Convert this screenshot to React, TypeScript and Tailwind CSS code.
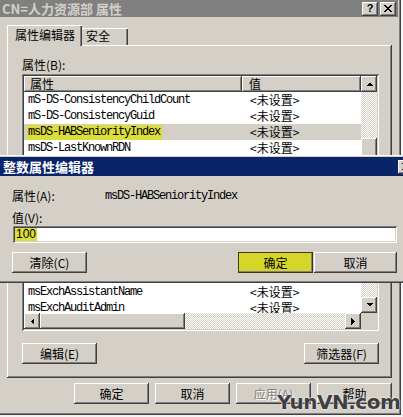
import React from "react";

const raised =
  "shadow-[inset_-1px_-1px_0_#404040,inset_1px_1px_0_#ffffff,inset_-2px_-2px_0_#808080]";
const sunken =
  "shadow-[inset_1px_1px_0_#808080,inset_-1px_-1px_0_#ffffff,inset_2px_2px_0_#404040,inset_-2px_-2px_0_#d4d0c8]";
const cjk = "font-['Noto_Sans_CJK_SC',sans-serif]";
const mono =
  "font-['Liberation_Mono','Noto_Sans_CJK_SC',monospace] text-[12px] tracking-[-1.2px]";
const dither =
  "bg-[repeating-conic-gradient(#ffffff_0%_25%,#d4d0c8_0%_50%)] bg-[length:2px_2px]";

type Dir = "up" | "down" | "left" | "right";

function Arrow({ dir }: { dir: Dir }) {
  const horiz = dir === "left" || dir === "right";
  const w = horiz ? 4 : 7;
  const h = horiz ? 7 : 4;
  const pts: Record<Dir, string> = {
    up: "0,4 7,4 3.5,0.5",
    down: "0,0 7,0 3.5,3.5",
    left: "4,0 4,7 0.5,3.5",
    right: "0,0 0,7 3.5,3.5",
  };
  return (
    <svg width={w} height={h} viewBox={`0 0 ${w} ${h}`} shapeRendering="crispEdges">
      <polygon points={pts[dir]} fill="#000" />
    </svg>
  );
}

function ScrollBtn({ dir }: { dir: Dir }) {
  return (
    <div className={`w-[16px] h-[16px] shrink-0 bg-[#d4d0c8] flex items-center justify-center ${raised}`}>
      <Arrow dir={dir} />
    </div>
  );
}

function Btn({
  label,
  className = "",
  disabled = false,
}: {
  label: string;
  className?: string;
  disabled?: boolean;
}) {
  return (
    <div
      className={`h-[21px] flex items-center justify-center text-[12px] ${cjk} ${raised} ${
        disabled ? "text-[#808080] [text-shadow:1px_1px_0_#ffffff]" : "text-black"
      } ${className}`}
    >
      {label}
    </div>
  );
}

const rows: { name: string; selected?: boolean }[] = [
  { name: "mS-DS-ConsistencyChildCount" },
  { name: "mS-DS-ConsistencyGuid" },
  { name: "msDS-HABSeniorityIndex", selected: true },
  { name: "msDS-LastKnownRDN" },
  { name: "msDS-NcType" },
  { name: "msDS-PhoneticCompanyName" },
  { name: "msDS-PhoneticDepartment" },
  { name: "msDS-PhoneticDisplayName" },
  { name: "msDS-PhoneticFirstName" },
  { name: "msDS-PhoneticLastName" },
  { name: "msExchADCGlobalNames" },
  { name: "msExchAddressBookFlags" },
  { name: "msExchAssistantName" },
  { name: "msExchAuditAdmin" },
];

function TitleBtn({ children }: { children: React.ReactNode }) {
  return (
    <div className={`w-[16px] h-[14px] bg-[#d4d0c8] flex items-center justify-center ${raised}`}>
      {children}
    </div>
  );
}

function XGlyph() {
  return (
    <svg width="8" height="7" viewBox="0 0 8 7" shapeRendering="crispEdges">
      <path d="M0 0h2v1h1v1h2v-1h1v-1h2v1h-1v1h-1v1h-1v1h1v1h1v1h1v1h-2v-1h-1v-1h-2v1h-1v1h-2v-1h1v-1h1v-1h1v-1h-1v-1h-1v-1h-1z" fill="#000" />
    </svg>
  );
}

export default function App() {
  return (
    <div className={`relative w-[403px] h-[417px] overflow-hidden bg-[#f4f4f4] ${cjk}`}>
      {/* Main properties window */}
      <div className="w-[401px] h-[415px] bg-[#d4d0c8] flex flex-col shadow-[inset_-1px_-1px_0_#404040,inset_-2px_-2px_0_#808080]">
        {/* Title bar */}
        <div className="h-[17px] mr-[3px] bg-[#808080] flex items-center justify-between pl-[2px] pr-[2px]">
          <span className="text-[13px] font-bold text-[#d4d0c8] leading-none whitespace-pre">
            CN=人力资源部 属性
          </span>
          <div className="flex items-center">
            <TitleBtn>
              <span className="text-[11px] font-bold font-['Liberation_Sans',sans-serif] leading-none">?</span>
            </TitleBtn>
            <div className="w-[2px]" />
            <TitleBtn>
              <XGlyph />
            </TitleBtn>
          </div>
        </div>

        <div className="pl-[7px] pr-[9px] pt-[8px] flex flex-col">
          {/* Tabs */}
          <div className="h-[20px] flex items-end">
            <div className="relative z-10 h-[21px] -mb-[1px] w-[75px] bg-[#d4d0c8] flex items-start pl-[8px] pt-[4px] text-[12px] leading-none shadow-[inset_1px_1px_0_#ffffff,inset_-1px_0_0_#404040,inset_-2px_0_0_#808080]">
              属性编辑器
            </div>
            <div className="h-[17px] w-[46px] bg-[#d4d0c8] flex items-start pl-[4px] pt-[2px] text-[12px] leading-none shadow-[inset_0_1px_0_#ffffff,inset_-1px_0_0_#404040,inset_-2px_0_0_#808080]">
              安全
            </div>
          </div>

          {/* Tab panel */}
          <div className={`h-[333px] bg-[#d4d0c8] pl-[15px] pt-[12px] flex flex-col ${raised}`}>
            <div className="h-[16px] text-[12px] leading-[16px]">属性(B):</div>
            {/* List box */}
            <div className={`mt-[1px] w-[357px] h-[257px] bg-white p-[2px] flex flex-col ${sunken}`}>
              <div className="flex flex-1 min-h-0">
                <div className="flex-1 min-w-0 flex flex-col overflow-hidden">
                  <div className="h-[16px] shrink-0 grid grid-cols-[218px_119px] bg-[#d4d0c8] text-[12px]">
                    <div className={`pl-[6px] leading-[16px] ${raised}`}>属性</div>
                    <div className={`pl-[7px] leading-[16px] ${raised}`}>值</div>
                  </div>
                  {rows.map((r) => (
                    <div
                      key={r.name}
                      className={`h-[16px] shrink-0 grid grid-cols-[218px_119px] items-center ${
                        r.selected ? "bg-[#d4d0c8]" : ""
                      }`}
                    >
                      <div className="pl-[3px] flex">
                        <span
                          className={`${mono} leading-[15px] pl-[1px] pr-[2px] ${
                            r.selected ? "bg-[#dcdc3c]" : ""
                          }`}
                        >
                          {r.name}
                        </span>
                      </div>
                      <div className="pl-[8px] text-[12px] leading-[16px]">&lt;未设置&gt;</div>
                    </div>
                  ))}
                </div>
                {/* Vertical scrollbar */}
                <div className={`w-[16px] flex flex-col ${dither}`}>
                  <ScrollBtn dir="up" />
                  <div className="h-[46px]" />
                  <div className={`h-[60px] bg-[#d4d0c8] ${raised}`} />
                  <div className="flex-1" />
                  <ScrollBtn dir="down" />
                </div>
              </div>
              {/* Horizontal scrollbar */}
              <div className="h-[16px] flex">
                <div className={`flex-1 flex ${dither}`}>
                  <ScrollBtn dir="left" />
                  <div className={`w-[145px] bg-[#d4d0c8] ${raised}`} />
                  <div className="flex-1" />
                  <ScrollBtn dir="right" />
                </div>
                <div className="w-[16px] bg-[#d4d0c8]" />
              </div>
            </div>
            <div className="mt-[12px] w-[357px] flex justify-between">
              <Btn label="编辑(E)" className="w-[75px]" />
              <Btn label="筛选器(F)" className="w-[75px]" />
            </div>
          </div>

          {/* Bottom buttons */}
          <div className="mt-[5px] flex justify-end gap-[6px]">
            <Btn label="确定" className="w-[75px]" />
            <Btn label="取消" className="w-[75px]" />
            <Btn label="应用(A)" className="w-[75px]" disabled />
            <Btn label="帮助" className="w-[75px]" />
          </div>
        </div>
      </div>

      {/* Integer attribute editor dialog */}
      <div
        className={`absolute left-[-3px] top-[155px] w-[421px] h-[128px] bg-[#d4d0c8] p-[2px] flex flex-col ${raised}`}
      >
        <div className="h-[19px] bg-[#0a246a] flex items-center justify-between pl-[4px] pr-[2px]">
          <span className="text-[13px] font-bold text-white leading-none">整数属性编辑器</span>
          <TitleBtn>
            <XGlyph />
          </TitleBtn>
        </div>
        <div className="pl-[13px] flex flex-col">
          <div className="mt-[13px] h-[14px] flex items-center text-[12px]">
            <span className="w-[93px]">属性(A):</span>
            <span className={`${mono}`}>msDS-HABSeniorityIndex</span>
          </div>
          <div className="mt-[8px] h-[14px] flex items-center text-[12px]">值(V):</div>
          <div className={`mt-[1px] ml-[1px] w-[384px] h-[17px] bg-white pl-[2px] flex items-center ${sunken}`}>
            <span className="bg-[#dcdc3c] px-[1px] text-[12px] leading-[13px] font-['Liberation_Sans',sans-serif]">
              100
            </span>
          </div>
          <div className="mt-[9px] flex">
            <Btn label="清除(C)" className="w-[75px]" />
            <Btn
              label="确定"
              className="ml-[151px] w-[75px] bg-[#d6d62a] outline outline-1 outline-[#3a3a10] -outline-offset-1"
            />
            <Btn label="取消" className="ml-[1px] w-[83px]" />
          </div>
        </div>
      </div>

      {/* Watermark */}
      <div className="absolute left-[277px] top-[392px] text-[20px] font-bold font-['DejaVu_Sans',sans-serif] tracking-[-0.5px] leading-none text-[#3f3f3f] [text-shadow:0_0_2px_#ffffff,0_0_1px_#ffffff]">
        YunVN.com
      </div>
    </div>
  );
}
